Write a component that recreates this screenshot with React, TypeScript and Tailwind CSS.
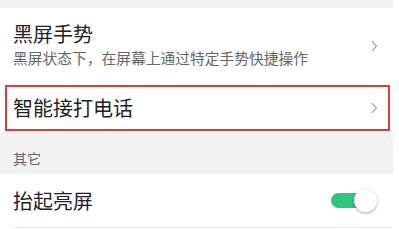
import React from "react";

const Chevron = () => (
  <svg width="7" height="12" viewBox="0 0 7 12" className="shrink-0">
    <path d="M1 1 L5.5 6 L1 11" fill="none" stroke="#a8a8a8" strokeWidth="1.2" />
  </svg>
);

export default function App() {
  return (
    <div
      className="w-[399px] h-[229px] bg-white overflow-hidden"
      style={{ fontFamily: '"Noto Sans CJK SC", "Noto Sans", sans-serif' }}
    >
      <div className="w-[393px]">
        <div className="h-[8px] bg-[#f2f2f2]" />
        <div className="flex items-start justify-between pl-[13px] pr-[15px] pt-[13px] h-[77px]">
          <div className="flex flex-col">
            <div className="text-[20px] leading-[26px] text-[#222]">黑屏手势</div>
            <div className="text-[14.75px] leading-[22px] text-[#666]">黑屏状态下，在屏幕上通过特定手势快捷操作</div>
          </div>
          <div className="mt-[19px]">
            <Chevron />
          </div>
        </div>
        <div className="mx-[5px] h-[46px] border-2 border-[#e53935] flex items-center justify-between pl-[6px] pr-[10px] w-[385px]">
          <div className="text-[20px] leading-[26px] text-[#222]">智能接打电话</div>
          <Chevron />
        </div>
        <div className="mt-[1px] h-[42px] bg-[#f2f2f2] pl-[13px] pt-[16px]">
          <div className="text-[14px] leading-[20px] text-[#666]">其它</div>
        </div>
        <div className="h-[53px] flex items-center justify-between pl-[13px] pr-[16px]">
          <div className="text-[20px] leading-[26px] text-[#222]">抬起亮屏</div>
          <div className="relative w-[46px] h-[24px] flex items-center">
            <div className="w-[38px] h-[15px] rounded-full bg-[#32c47c]" />
            <div className="absolute right-0 top-0 w-[23px] h-[23px] rounded-full bg-white shadow-[0_1px_3px_rgba(0,0,0,0.35)]" />
          </div>
        </div>
        <div className="ml-[12px] h-[1px] bg-[#ececec]" />
      </div>
    </div>
  );
}
